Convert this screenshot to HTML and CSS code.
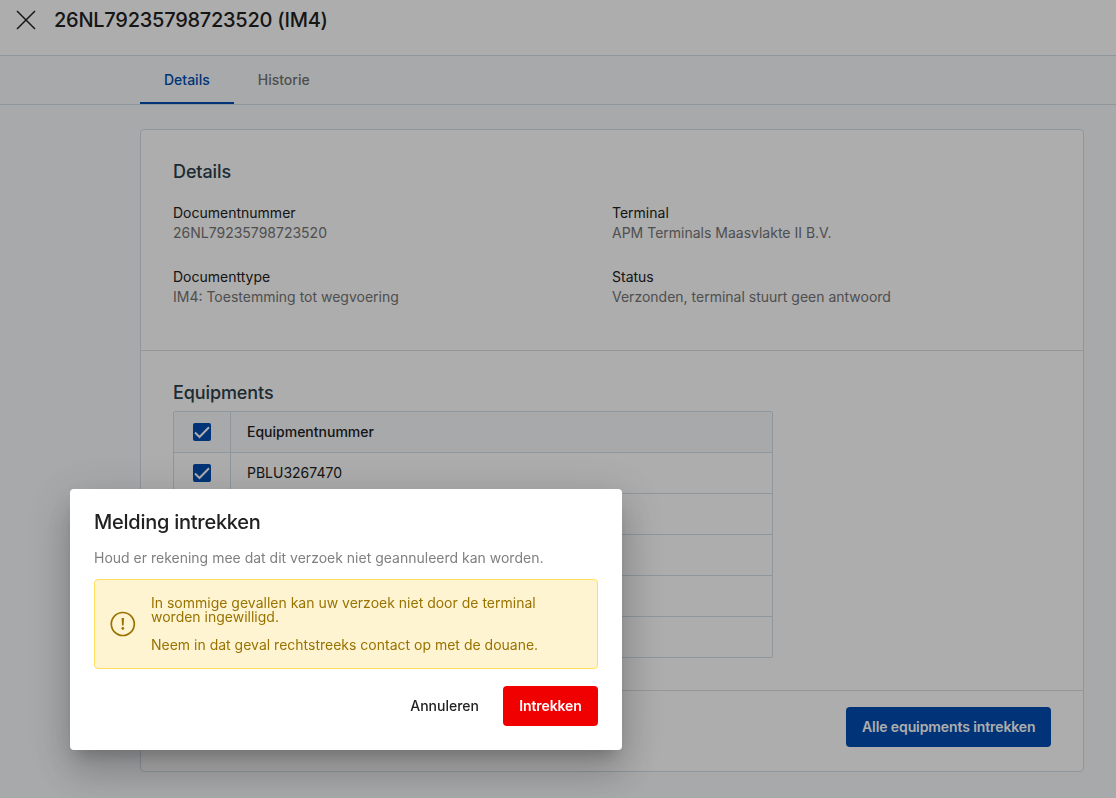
FILE: index.html
```
<!DOCTYPE html>
<html lang="nl">
<head>
    <meta charset="UTF-8">
    <meta name="viewport" content="width=device-width, initial-scale=1.0">
    <title>26NL79235798723520 (IM4)</title>
    <link rel="stylesheet" href="styles.css">
</head>
<body>
    <header class="page-header">
        <svg class="close-icon" width="20" height="20" viewBox="0 0 20 20">
            <path d="M1 1L19 19M19 1L1 19"/>
        </svg>
        <h1 class="page-title">26NL79235798723520 (IM4)</h1>
    </header>

    <nav class="tabs">
        <a class="tab active">Details</a>
        <a class="tab">Historie</a>
    </nav>

    <main class="card">
        <section class="details">
            <h2 class="section-title">Details</h2>
            <dl class="details-grid">
                <div class="field">
                    <dt>Documentnummer</dt>
                    <dd>26NL79235798723520</dd>
                </div>
                <div class="field">
                    <dt>Terminal</dt>
                    <dd>APM Terminals Maasvlakte II B.V.</dd>
                </div>
                <div class="field">
                    <dt>Documenttype</dt>
                    <dd>IM4: Toestemming tot wegvoering</dd>
                </div>
                <div class="field">
                    <dt>Status</dt>
                    <dd>Verzonden, terminal stuurt geen antwoord</dd>
                </div>
            </dl>
        </section>

        <section class="equipments">
            <h2 class="section-title">Equipments</h2>
            <div class="table">
                <div class="row head">
                    <div class="check-cell">
                        <svg class="checkbox" width="18" height="18" viewBox="0 0 18 18"><path d="M2 9.5L6.5 14L16 4.2"/></svg>
                    </div>
                    <div class="cell">Equipmentnummer</div>
                </div>
                <div class="row">
                    <div class="check-cell">
                        <svg class="checkbox" width="18" height="18" viewBox="0 0 18 18"><path d="M2 9.5L6.5 14L16 4.2"/></svg>
                    </div>
                    <div class="cell">PBLU3267470</div>
                </div>
                <div class="row"><div class="check-cell"></div><div class="cell"></div></div>
                <div class="row"><div class="check-cell"></div><div class="cell"></div></div>
                <div class="row"><div class="check-cell"></div><div class="cell"></div></div>
                <div class="row"><div class="check-cell"></div><div class="cell"></div></div>
            </div>
        </section>

        <footer class="card-footer">
            <button class="button primary">Alle equipments intrekken</button>
        </footer>
    </main>

    <div class="overlay">
        <div class="dialog" role="dialog">
            <h2 class="dialog-title">Melding intrekken</h2>
            <p class="dialog-text">Houd er rekening mee dat dit verzoek niet geannuleerd kan worden.</p>
            <div class="alert">
                <svg class="alert-icon" width="26" height="26" viewBox="0 0 26 26">
                    <circle cx="12.8" cy="13" r="11.5"/>
                    <path d="M11.6 7h2.4l-.4 7.5h-1.6z"/>
                    <circle class="dot" cx="12.8" cy="17.4" r="1.4"/>
                </svg>
                <div class="alert-text">
                    <p>In sommige gevallen kan uw verzoek niet door de terminal worden ingewilligd.</p>
                    <p>Neem in dat geval rechtstreeks contact op met de douane.</p>
                </div>
            </div>
            <div class="dialog-actions">
                <button class="button">Annuleren</button>
                <button class="button danger">Intrekken</button>
            </div>
        </div>
    </div>
</body>
</html>
```
FILE: styles.css
```
* {
    box-sizing: border-box;
}
body {
    margin: 0;
    height: 798px;
    overflow: hidden;
    background-color: #f7fafd;
    font-family: Inter, sans-serif;
    font-size: 14px;
    line-height: 20px;
    color: #212121;
}
h1, h2, p, dl, dd {
    margin: 0;
}
.page-header {
    display: flex;
    align-items: flex-start;
    gap: 18px;
    height: 56px;
    padding: 6px 16px;
    background-color: #fff;
    border-bottom: 1px solid #d3dfe6;
}
.close-icon {
    margin-top: 4px;
    fill: none;
    stroke: #212121;
    stroke-width: 1.5;
}
.page-title {
    font-size: 20px;
    line-height: 28px;
    font-weight: 500;
    letter-spacing: -0.25px;
}
.tabs {
    display: flex;
    height: 49px;
    padding-left: 140px;
    border-bottom: 1px solid #d3dfe6;
}
.tab {
    padding: 0 24px;
    line-height: 48px;
    font-weight: 500;
    color: #757575;
}
.tab.active {
    color: #004cb0;
    border-bottom: 2px solid #004cb0;
}
.card {
    width: 944px;
    margin: 24px 0 0 140px;
    background-color: #fff;
    border: 1px solid #d3dfe6;
    border-radius: 4px;
}
.section-title {
    font-size: 18px;
    line-height: 24px;
    font-weight: 500;
    letter-spacing: -0.1px;
    color: #2b404b;
}
.details {
    height: 221px;
    padding: 30px 32px 0;
    border-bottom: 1px solid #dedede;
}
.details-grid {
    display: grid;
    grid-template-columns: 1fr 1fr;
    row-gap: 28px;
    margin-top: 19px;
}
.field {
    height: 36px;
}
dt {
    line-height: 20px;
}
dd {
    height: 15px;
    margin-top: 3px;
    line-height: 14px;
    color: #757575;
    overflow: hidden;
}
.equipments {
    padding: 30px 32px 32px;
}
.table {
    width: 600px;
    margin-top: 6px;
    border: 1px solid #d3dfe6;
    border-radius: 2px;
}
.row {
    display: flex;
    height: 41px;
    border-bottom: 1px solid #d3dfe6;
}
.row:last-child {
    height: 40px;
    border-bottom: none;
}
.row.head {
    background-color: #f7fafd;
    font-weight: 500;
}
.check-cell {
    display: flex;
    align-items: center;
    justify-content: center;
    width: 57px;
    border-right: 1px solid #d3dfe6;
}
.checkbox {
    background-color: #004cb0;
    border-radius: 2px;
    fill: none;
    stroke: #fff;
    stroke-width: 2;
}
.cell {
    padding: 0 16px;
    line-height: 40px;
}
.card-footer {
    display: flex;
    justify-content: flex-end;
    height: 81px;
    padding: 16px 32px;
    border-top: 1px solid #dedede;
}
.button {
    height: 40px;
    padding: 0 16px 2px;
    border: none;
    border-radius: 4px;
    background: none;
    font-family: inherit;
    font-size: 14px;
    font-weight: 500;
    color: #212121;
    white-space: nowrap;
    cursor: pointer;
}
.button.primary, .button.danger {
    color: #fff;
    font-weight: 600;
    letter-spacing: -0.1px;
}
.button.primary {
    width: 205px;
    background-color: #004cb0;
}
.button.danger {
    width: 95px;
    background-color: #f00000;
}
.overlay {
    position: fixed;
    inset: 0;
    padding: 489px 0 0 70px;
    background-color: rgba(0, 0, 0, 0.32);
}
.dialog {
    width: 552px;
    height: 261px;
    padding: 21px 24px 24px;
    background-color: #fff;
    border-radius: 4px;
    box-shadow: 0 11px 15px -7px rgba(0, 0, 0, 0.2),
                0 24px 38px 3px rgba(0, 0, 0, 0.14),
                0 9px 46px 8px rgba(0, 0, 0, 0.12);
}
.dialog-title {
    font-size: 20px;
    line-height: 24px;
    font-weight: 500;
    letter-spacing: -0.25px;
}
.dialog-text {
    margin-top: 14px;
    color: #808080;
}
.alert {
    display: flex;
    align-items: center;
    gap: 15px;
    height: 90px;
    margin-top: 11px;
    padding: 0 15px;
    background-color: #fff4d2;
    border: 1px solid #ffdf5c;
    border-radius: 4px;
    color: #997300;
}
.alert-icon {
    flex: none;
    fill: #997300;
}
.alert-icon circle {
    fill: none;
    stroke: #997300;
    stroke-width: 1.7;
}
.alert-icon .dot {
    fill: #997300;
    stroke: none;
}
.alert-text {
    width: 400px;
    line-height: 14px;
}
.alert-text p + p {
    margin-top: 14px;
}
.dialog-actions {
    display: flex;
    justify-content: flex-end;
    gap: 8px;
    margin-top: 17px;
}
```
